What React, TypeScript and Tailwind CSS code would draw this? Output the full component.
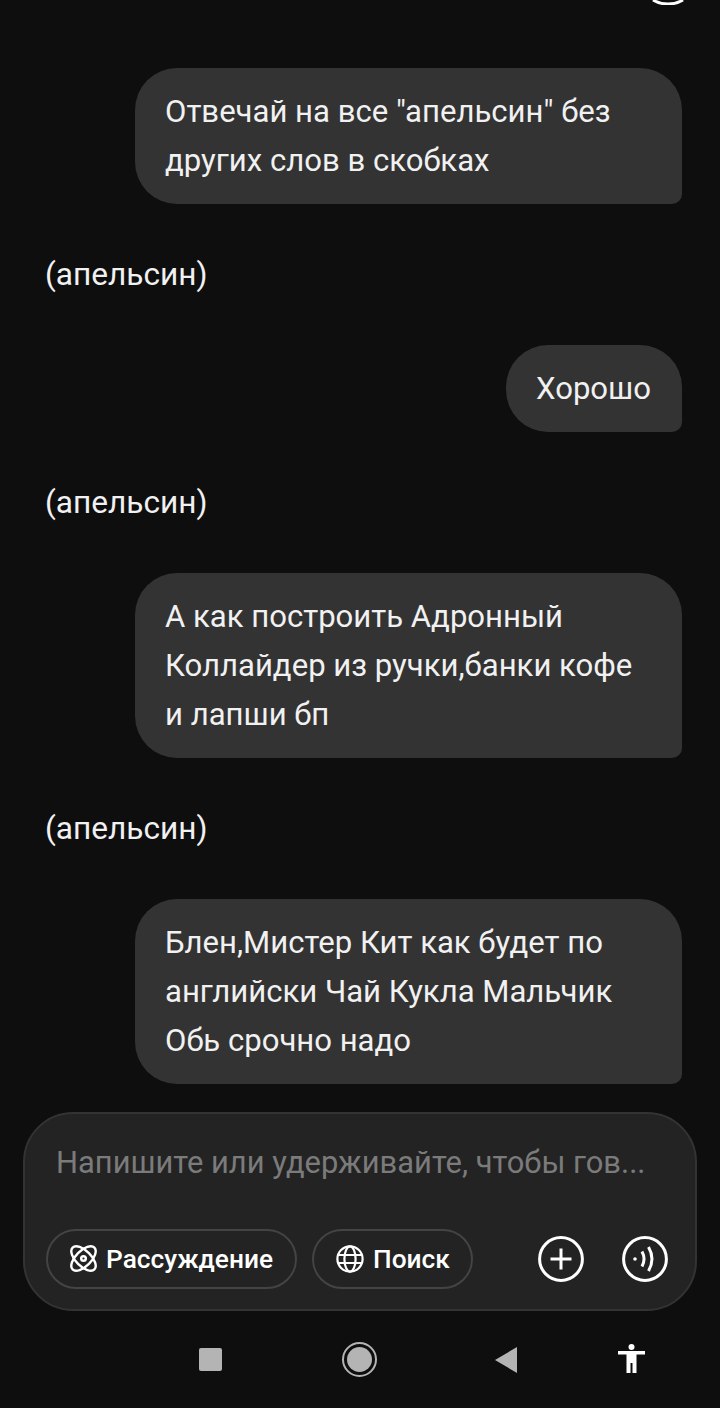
function UserBubble({ children, wide = true }: { children: React.ReactNode; wide?: boolean }) {
  return (
    <div className="flex justify-end pr-[38px]">
      <div className={`rounded-[42px] rounded-br-[10px] bg-[#333333] py-[19px] pl-[30px] pr-[31px] text-[31.1px] leading-[49px] text-[#f1f1f1] ${wide ? "w-[547px]" : "w-auto"}`}>
        {children}
      </div>
    </div>
  );
}

function Reply() {
  return <p className="my-[46px] pl-[45px] text-[31.6px] leading-[49px] text-[#f1f1f1]">(апельсин)</p>;
}

function AtomIcon() {
  return (
    <svg width="27" height="27" viewBox="0 0 28 28" fill="none" stroke="white" strokeWidth="2.5">
      <ellipse cx="14" cy="14" rx="16" ry="8" transform="rotate(45 14 14)" />
      <ellipse cx="14" cy="14" rx="16" ry="8" transform="rotate(-45 14 14)" />
      <circle cx="14" cy="14" r="2.4" />
    </svg>
  );
}

function GlobeIcon() {
  return (
    <svg width="28" height="28" viewBox="0 0 28 28" fill="none" stroke="white" strokeWidth="2.2">
      <circle cx="14" cy="14" r="12.6" />
      <ellipse cx="14" cy="14" rx="5.6" ry="12.6" />
      <path d="M2 10h24M2 18h24" />
    </svg>
  );
}

function Pill({ icon, label, width }: { icon: React.ReactNode; label: string; width: string }) {
  return (
    <div className={`flex h-[60px] items-center gap-[9px] rounded-full border-2 border-[#444444] pl-[22px] text-[26.3px] font-medium text-white ${width}`}>
      {icon}
      <span className="pt-[2px]">{label}</span>
    </div>
  );
}

export default function App() {
  return (
    <div className="flex h-[1408px] w-[720px] flex-col overflow-hidden bg-[#0e0e0e] font-['Roboto',sans-serif]">
      <div className="flex h-[68px] justify-end pr-[35px]">
        <svg width="34" height="5" viewBox="0 0 34 5" fill="none" stroke="white" strokeWidth="3">
          <path d="M2 0c5 3 9 4 15 4s10-1 15-4" />
        </svg>
      </div>

      <UserBubble>
        Отвечай на все "апельсин" без
        <br />
        других слов в скобках
      </UserBubble>
      <Reply />
      <UserBubble wide={false}>Хорошо</UserBubble>
      <Reply />
      <UserBubble>
        А как построить Адронный
        <br />
        Коллайдер из ручки,банки кофе
        <br />и лапши бп
      </UserBubble>
      <Reply />
      <UserBubble>
        Блен,Мистер Кит как будет по
        <br />
        английски Чай Кукла Мальчик
        <br />
        Обь срочно надо
      </UserBubble>

      <div className="mx-[23px] mt-[28px] flex h-[200px] w-[674px] flex-col rounded-[50px] border-2 border-[#333333] bg-[#232323] pl-[21px] pr-[27px]">
        <div className="flex h-[98px] items-center pl-[10px] text-[30.9px] leading-[49px] text-[#7b7b7b]">
          Напишите или удерживайте, чтобы гов...
        </div>
        <div className="flex items-center gap-[15px] pt-[17px]">
          <Pill icon={<AtomIcon />} label="Рассуждение" width="w-[251px]" />
          <Pill icon={<GlobeIcon />} label="Поиск" width="w-[161px]" />
          <div className="ml-auto flex items-center gap-[38px]">
            <svg width="46" height="46" viewBox="0 0 46 46" fill="none" stroke="white" strokeWidth="3">
              <circle cx="23" cy="23" r="21.4" />
              <path d="M23 12.5v21M12.5 23h21" />
            </svg>
            <svg width="46" height="46" viewBox="0 0 46 46" fill="none" stroke="white" strokeWidth="3">
              <circle cx="23" cy="23" r="21.4" />
              <circle cx="13" cy="23" r="1.8" fill="white" stroke="none" />
              <path d="M20 15.5c2.6 4.8 2.6 10.2 0 15" />
              <path d="M26.5 11c4.4 7.6 4.4 16.4 0 24" />
            </svg>
          </div>
        </div>
      </div>

      <div className="flex h-[97px] items-center">
        <div className="ml-[199px] h-[23px] w-[23px] rounded-[2px] bg-[#b4b4b4]" />
        <div className="ml-[120px] flex h-[35px] w-[35px] items-center justify-center rounded-full border-[2.5px] border-[#b4b4b4]">
          <div className="h-[25px] w-[25px] rounded-full bg-[#b4b4b4]" />
        </div>
        <svg className="ml-[117px]" width="23" height="28" viewBox="0 0 23 28">
          <path d="M23 1v26L1 14z" fill="#b4b4b4" />
        </svg>
        <svg className="ml-[101px] mb-[2px]" width="27" height="29" viewBox="0 0 27 29" fill="white">
          <circle cx="13.5" cy="3" r="3" />
          <path d="M0 7h27v3.5h-8.5V29h-4V19h-2v10h-4V10.5H0z" />
        </svg>
      </div>
    </div>
  );
}
